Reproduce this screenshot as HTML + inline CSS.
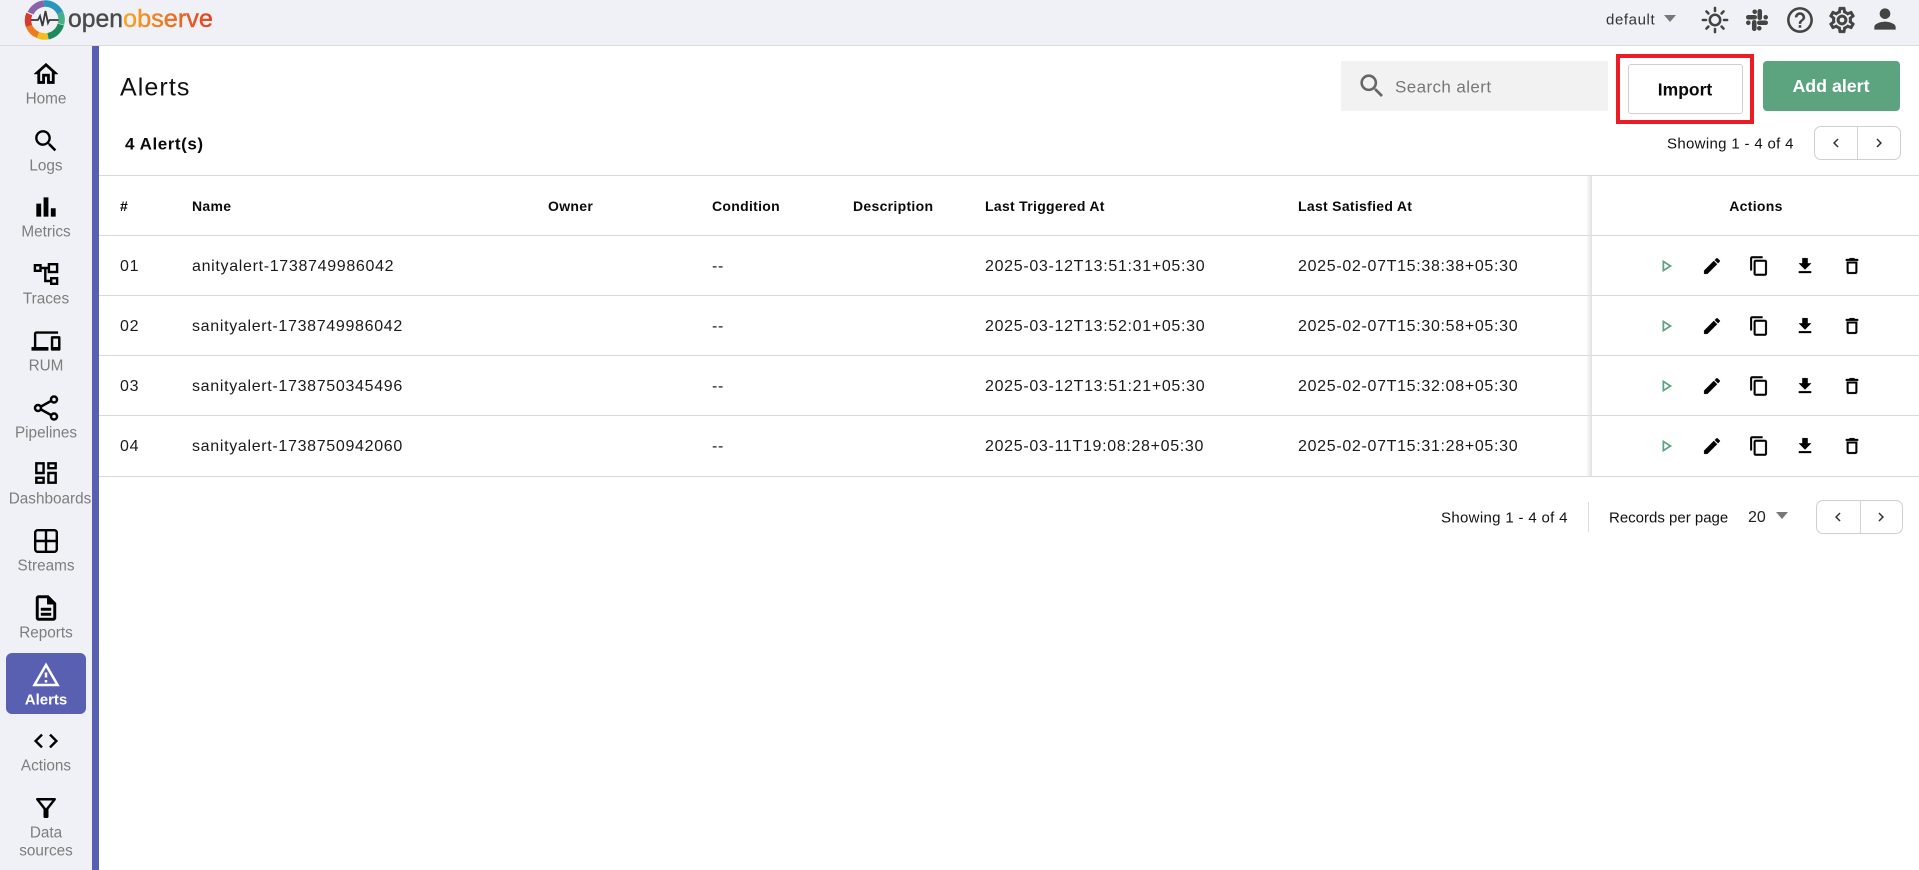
<!DOCTYPE html>
<html><head><meta charset="utf-8"><title>Alerts</title>
<style>
*{box-sizing:border-box}
html,body{margin:0;padding:0;width:1919px;height:870px;overflow:hidden;background:#fff;font-family:"Liberation Sans",sans-serif;color:#111}
.a{position:absolute}
.t{position:absolute;white-space:nowrap;transform:translateY(-50%);line-height:1}
.c{transform:translate(-50%,-50%);text-align:center}
.nl{font-size:15.3px;color:#7d7d7d;margin-top:1px}
.th{font-size:14px;font-weight:bold;color:#0a0a0a;letter-spacing:.3px}
.td{font-size:16px;color:#1a1a1a;letter-spacing:.68px;margin-top:1px}
.line{position:absolute;left:99px;right:0;height:1px;background:#d9d9d9}
svg.i{position:absolute;transform:translate(-50%,-50%);overflow:visible}
svg.b{stroke:#000;stroke-width:.35px}
.pg{position:absolute;border:1px solid #cfcfcf;border-radius:7px;background:#fff}
.pg i{position:absolute;top:0;bottom:0;width:1px;background:#d5d5d5}
</style></head><body>
<svg width="0" height="0" style="position:absolute"><defs>
<symbol id="play" viewBox="0 0 24 24"><path d="M10 8.640L15.270 12 10 15.360V8.640M8 5v14l11-7L8 5z"/></symbol>
<symbol id="edit" viewBox="0 0 24 24"><path d="M3 17.250V21h3.750L17.810 9.940l-3.750-3.750L3 17.250zM20.710 7.040c.39-.39.39-1.020 0-1.410l-2.340-2.340c-.39-.39-1.020-.39-1.410 0l-1.830 1.830 3.750 3.750 1.830-1.830z"/></symbol>
<symbol id="copy" viewBox="0 0 24 24"><path d="M16 1H4c-1.100 0-2 .9-2 2v14h2V3h12V1zm3 4H8c-1.100 0-2 .9-2 2v14c0 1.100.9 2 2 2h11c1.100 0 2-.9 2-2V7c0-1.100-.9-2-2-2zm0 16H8V7h11v14z"/></symbol>
<symbol id="down" viewBox="0 0 24 24"><path d="M19 9h-4V3H9v6H5l7 7 7-7zM5 18v2h14v-2H5z"/></symbol>
<symbol id="del" viewBox="0 0 24 24"><path d="M6 19c0 1.100.9 2 2 2h8c1.100 0 2-.9 2-2V7H6v12zM8 9h8v10H8V9zm7.500-5l-1-1h-5l-1 1H5v2h14V4z"/></symbol>
<symbol id="chl" viewBox="0 0 24 24"><path d="M15.400 7.400L14 6l-6 6 6 6 1.400-1.400L10.800 12z"/></symbol>
<symbol id="chr" viewBox="0 0 24 24"><path d="M8.600 16.600L10 18l6-6-6-6-1.400 1.400L13.200 12z"/></symbol>
</defs></svg>

<!-- top bar -->
<div class="a" style="left:0;top:0;width:1919px;height:46px;background:#f0f1f7;border-bottom:1px solid #dcdcdf"></div>
<svg class="a" style="left:24px;top:0" width="42" height="40" viewBox="0 0 42 40" fill="none">
<g stroke-width="6.500" fill="none">
<path d="M6.600 13.200A16.500 16.500 0 0 1 20 3.600" stroke="#8a63ab"/>
<path d="M20 3.600A16.500 16.500 0 0 1 36.200 13" stroke="#2b96bd"/>
<path d="M36.200 13A16.500 16.500 0 0 1 37 24" stroke="#45b08a"/>
<path d="M36.800 24.500A16.500 16.500 0 0 1 24 36.200" stroke="#1e8a5c"/>
<path d="M24 36.200A16.500 16.500 0 0 1 14 35" stroke="#f2bd1d"/>
<path d="M14 35A16.500 16.500 0 0 1 5 26" stroke="#ee7a22"/>
<path d="M5 26A16.500 16.500 0 0 1 5.300 14" stroke="#d63a2c"/>
</g>
<path d="M7 20h7l2-4 2.500 10 3-15 2.500 12 1.500-3h9" stroke="#3a3a3a" stroke-width="1.800"/>
</svg>
<svg class="a" style="left:66px;top:0" width="150" height="42">
<defs><linearGradient id="lg" x1="0" x2="1" y1="0" y2="0"><stop offset="0" stop-color="#f7a823"/><stop offset="1" stop-color="#e2401f"/></linearGradient></defs>
<text x="2" y="27" font-family="Liberation Sans,sans-serif" font-size="25" fill="#4a4a4a" stroke="#4a4a4a" stroke-width=".4" textLength="55" lengthAdjust="spacingAndGlyphs">open</text>
<text x="57" y="27" font-family="Liberation Sans,sans-serif" font-size="25" fill="url(#lg)" stroke="url(#lg)" stroke-width=".4" textLength="90" lengthAdjust="spacingAndGlyphs">observe</text>
</svg>
<div class="t" style="left:1606px;top:20px;font-size:15px;letter-spacing:.6px;color:#333">default</div>
<div class="a" style="left:1664px;top:15px;width:0;height:0;border-left:6.500px solid transparent;border-right:6.500px solid transparent;border-top:7px solid #777"></div>
<svg class="i" style="left:1715px;top:20px" width="27" height="27" viewBox="0 0 30 30" fill="none" stroke="#444" stroke-width="2.800" stroke-linecap="round"><circle cx="15" cy="15" r="5.800"/><path d="M15 1.500v3.500M15 25v3.500M1.500 15H5M25 15h3.500M5.500 5.500l2.200 2.200M22.300 22.300l2.200 2.200M5.500 24.500l2.200-2.200M22.300 7.700l2.200-2.200"/></svg>
<svg class="i" style="left:1757px;top:20px" width="22" height="22" viewBox="0 0 24 24" fill="none" stroke="#444" stroke-width="5" stroke-linecap="round"><path d="M2.500 9h7M9.500 3v.01M15 2.500v7M21.500 9v.01M14.500 15h7M14.500 21v.01M9 14.500v7M2.500 15v.01"/></svg>
<svg class="i" style="left:1800px;top:20px" width="31" height="31" viewBox="0 0 24 24" fill="#444"><path d="M11 18h2v-2h-2v2zm1-16C6.480 2 2 6.480 2 12s4.480 10 10 10 10-4.480 10-10S17.520 2 12 2zm0 18c-4.410 0-8-3.590-8-8s3.590-8 8-8 8 3.590 8 8-3.590 8-8 8zm0-14c-2.210 0-4 1.790-4 4h2c0-1.100.9-2 2-2s2 .9 2 2c0 2-3 1.750-3 5h2c0-2.250 3-2.500 3-5 0-2.210-1.790-4-4-4z"/></svg>
<svg class="i" style="left:1842px;top:20px" width="31" height="31" viewBox="0 0 24 24" fill="#444" stroke="#444" stroke-width=".35"><path d="M19.430 12.980c.04-.32.07-.64.07-.98 0-.34-.03-.66-.07-.98l2.110-1.650c.19-.15.24-.42.12-.64l-2-3.460c-.09-.16-.26-.25-.44-.25-.06 0-.12.01-.17.03l-2.490 1c-.52-.4-1.080-.73-1.690-.98l-.38-2.650C14.460 2.180 14.250 2 14 2h-4c-.25 0-.46.18-.49.42l-.38 2.650c-.61.25-1.170.59-1.690.98l-2.490-1c-.06-.02-.12-.03-.18-.03-.17 0-.34.09-.43.25l-2 3.460c-.13.22-.07.49.12.64l2.110 1.650c-.04.32-.07.65-.07.98 0 .33.03.66.07.98l-2.110 1.650c-.19.15-.24.42-.12.64l2 3.460c.09.16.26.25.44.25.06 0 .12-.01.17-.03l2.490-1c.52.4 1.080.73 1.690.98l.38 2.650c.03.24.24.42.49.42h4c.25 0 .46-.18.49-.42l.38-2.650c.61-.25 1.170-.59 1.690-.98l2.490 1c.06.02.12.03.18.03.17 0 .34-.09.43-.25l2-3.460c.12-.22.07-.49-.12-.64l-2.110-1.650zm-1.980-1.710c.04.31.05.52.05.73 0 .21-.02.43-.05.73l-.14 1.130.89.7 1.080.84-.7 1.210-1.270-.51-1.040-.42-.9.68c-.43.32-.84.56-1.250.73l-1.060.43-.16 1.130-.2 1.350h-1.400l-.19-1.350-.16-1.130-1.060-.43c-.43-.18-.83-.41-1.230-.71l-.91-.7-1.060.43-1.270.51-.7-1.210 1.080-.84.89-.7-.14-1.130c-.03-.31-.05-.54-.05-.74s.02-.43.05-.73l.14-1.130-.89-.7-1.080-.84.7-1.210 1.270.51 1.040.42.9-.68c.43-.32.84-.56 1.250-.73l1.060-.43.16-1.130.2-1.350h1.390l.19 1.350.16 1.130 1.060.43c.43.18.83.41 1.230.71l.91.7 1.060-.43 1.270-.51.7 1.210-1.070.85-.89.7.14 1.130zM12 8c-2.210 0-4 1.790-4 4s1.790 4 4 4 4-1.790 4-4-1.790-4-4-4zm0 6c-1.100 0-2-.9-2-2s.9-2 2-2 2 .9 2 2-.9 2-2 2z"/></svg>
<svg class="i" style="left:1885px;top:19px" width="32" height="32" viewBox="0 0 24 24" fill="#444"><path d="M12 12c2.210 0 4-1.790 4-4s-1.790-4-4-4-4 1.790-4 4 1.790 4 4 4zm0 2c-2.670 0-8 1.340-8 4v2h16v-2c0-2.660-5.330-4-8-4z"/></svg>

<!-- sidebar -->
<div class="a" style="left:0;top:46px;width:92px;height:824px;background:#f0f1f7"></div>
<div class="a" style="left:92px;top:46px;width:7px;height:824px;background:#5960b2"></div>
<div class="a" style="left:6px;top:653px;width:80px;height:61px;background:#5960b2;border-radius:6px"></div>

<svg class="i b" style="left:46px;top:74px" width="29" height="29" viewBox="0 0 24 24"><path d="M12 5.690l5 4.500V18h-2v-6H9v6H7v-7.810l5-4.500M12 3L2 12h3v8h6v-6h2v6h6v-8h3L12 3z"/></svg>
<div class="t c nl" style="left:46px;top:98px">Home</div>
<svg class="i" style="left:46px;top:141px" width="29" height="29" viewBox="0 0 24 24"><path d="M15.500 14h-.79l-.28-.27C15.410 12.590 16 11.110 16 9.500 16 5.910 13.090 3 9.500 3S3 5.910 3 9.500 5.910 16 9.500 16c1.610 0 3.090-.59 4.230-1.570l.27.28v.79l5 4.990L20.490 19l-4.990-5zm-6 0C7.010 14 5 11.990 5 9.500S7.010 5 9.500 5 14 7.010 14 9.500 11.990 14 9.500 14z"/></svg>
<div class="t c nl" style="left:46px;top:165px">Logs</div>
<svg class="i" style="left:46px;top:207px" width="29" height="29" viewBox="0 0 24 24"><path d="M4 9.200h4V20H4zM10 4h4v16h-4zm6 9h4v7h-4z"/></svg>
<div class="t c nl" style="left:46px;top:231px">Metrics</div>
<svg class="i" style="left:46px;top:273px" width="26" height="24" viewBox="0 0 26 24" fill="none" stroke="#000" stroke-width="2.400"><rect x="1.900" y="4.200" width="5.600" height="5.600"/><rect x="15.900" y="3.200" width="8.200" height="7.800"/><rect x="18.200" y="17.200" width="5.900" height="5.600"/><path d="M7.500 7H16M12.300 7V20H18"/></svg>
<div class="t c nl" style="left:46px;top:298px">Traces</div>
<svg class="i" style="left:46px;top:341px" width="29" height="29" viewBox="0 0 24 24"><path d="M4 6h18V4H4c-1.100 0-2 .9-2 2v11H0v3h14v-3H4V6zm19 2h-6c-.55 0-1 .45-1 1v10c0 .55.45 1 1 1h6c.55 0 1-.45 1-1V9c0-.55-.45-1-1-1zm-1 9h-4v-7h4v7z"/></svg>
<div class="t c nl" style="left:46px;top:365px">RUM</div>
<svg class="i" style="left:46px;top:408px" width="26" height="26" viewBox="0 0 26 26" fill="none" stroke="#000" stroke-width="2.500"><circle cx="5" cy="13" r="3"/><circle cx="21" cy="4.500" r="3"/><circle cx="21" cy="21.500" r="3"/><path d="M8 11.500l10-5.500M8 14.500l10 5.500"/></svg>
<div class="t c nl" style="left:46px;top:432px">Pipelines</div>
<svg class="i" style="left:46px;top:473px" width="29" height="29" viewBox="0 0 24 24"><path d="M19 5v2h-4V5h4M9 5v6H5V5h4m10 8v6h-4v-6h4M9 17v2H5v-2h4M21 3h-8v6h8V3zM11 3H3v10h8V3zm10 8h-8v10h8V11zm-10 4H3v6h8v-6z"/></svg>
<div class="t c nl" style="left:50px;top:498px">Dashboards</div>
<svg class="i" style="left:46px;top:541px" width="24" height="24" viewBox="0 0 24 24" fill="none" stroke="#000" stroke-width="2.400"><rect x="1.200" y="1.200" width="21.600" height="21.600" rx="2.500"/><path d="M12 1v22M1 12h22"/></svg>
<div class="t c nl" style="left:46px;top:565px">Streams</div>
<svg class="i b" style="left:46px;top:608px" width="30" height="30" viewBox="0 0 24 24"><path d="M8 16h8v2H8zm0-4h8v2H8zm6-10H6c-1.100 0-2 .9-2 2v16c0 1.100.89 2 1.990 2H18c1.100 0 2-.9 2-2V8l-6-6zm4 18H6V4h7v5h5v11z"/></svg>
<div class="t c nl" style="left:46px;top:632px">Reports</div>
<svg class="i" style="left:46px;top:675px" width="30" height="30" viewBox="0 0 24 24" fill="#fff"><path d="M12 5.990L19.530 19H4.470L12 5.990M12 2L1 21h22L12 2zm1 14h-2v2h2v-2zm0-6h-2v4h2v-4z"/></svg>
<div class="t c nl" style="left:46px;top:699px;color:#fff;font-weight:bold;font-size:15px">Alerts</div>
<svg class="i" style="left:46px;top:741px" width="29" height="29" viewBox="0 0 24 24"><path d="M9.400 16.600L4.800 12l4.600-4.600L8 6l-6 6 6 6 1.400-1.400zm5.200 0l4.600-4.600-4.600-4.600L16 6l6 6-6 6-1.400-1.400z"/></svg>
<div class="t c nl" style="left:46px;top:765px">Actions</div>
<svg class="i" style="left:46px;top:808px" width="30" height="30" viewBox="0 0 24 24"><path d="M7 6h10l-5.010 6.300L7 6zm-2.750-.39C6.270 8.200 10 13 10 13v6c0 .55.45 1 1 1h2c.55 0 1-.45 1-1v-6s3.720-4.800 5.740-7.390c.51-.66.04-1.610-.79-1.610H5.040c-.83 0-1.300.95-.79 1.610z"/></svg>
<div class="t c nl" style="left:46px;top:832px">Data</div>
<div class="t c nl" style="left:46px;top:850px">sources</div>

<!-- title row -->
<div class="t" style="left:120px;top:88px;font-size:25px;letter-spacing:1.1px;color:#111">Alerts</div>
<div class="a" style="left:1341px;top:61px;width:267px;height:50px;background:#f2f2f2"></div>
<svg class="i" style="left:1372px;top:86px" width="31" height="31" viewBox="0 0 24 24" fill="#666"><path d="M15.500 14h-.79l-.28-.27C15.410 12.590 16 11.110 16 9.500 16 5.910 13.090 3 9.500 3S3 5.910 3 9.500 5.910 16 9.500 16c1.610 0 3.090-.59 4.230-1.570l.27.28v.79l5 4.990L20.490 19l-4.990-5zm-6 0C7.010 14 5 11.990 5 9.500S7.010 5 9.500 5 14 7.010 14 9.500 11.990 14 9.500 14z"/></svg>
<div class="t" style="left:1395px;top:87px;font-size:17px;letter-spacing:.4px;color:#777">Search alert</div>
<div class="a" style="left:1616px;top:54px;width:138px;height:70px;border:4.500px solid #ed1c24"></div>
<div class="a" style="left:1628px;top:64px;width:115px;height:50px;border:1px solid #cfcfcf;border-radius:3px;background:#fff"></div>
<div class="t c" style="left:1685px;top:90px;font-size:17.500px;font-weight:bold;color:#0a0a0a">Import</div>
<div class="a" style="left:1763px;top:61px;width:137px;height:50px;background:#5ca380;border-radius:4px"></div>
<div class="t c" style="left:1831px;top:87px;font-size:17.800px;font-weight:bold;color:#fff">Add alert</div>

<div class="t" style="left:125px;top:144px;font-size:17px;letter-spacing:.55px;font-weight:bold;color:#0a0a0a">4 Alert(s)</div>
<div class="t" style="left:1667px;top:144px;font-size:15px;letter-spacing:.33px;color:#111">Showing 1 - 4 of 4</div>
<div class="pg" style="left:1814px;top:126px;width:87px;height:34px"><i style="left:42px"></i></div>
<svg class="i" style="left:1836px;top:143px" width="18" height="18" fill="#333"><use href="#chl"/></svg>
<svg class="i" style="left:1879px;top:143px" width="18" height="18" fill="#333"><use href="#chr"/></svg>

<!-- table -->
<div class="line" style="top:175px"></div>
<div class="line" style="top:235px"></div>
<div class="line" style="top:295px"></div>
<div class="line" style="top:355px"></div>
<div class="line" style="top:415px"></div>
<div class="line" style="top:476px"></div>
<div class="a" style="left:1586px;top:176px;width:6px;height:300px;background:linear-gradient(90deg,rgba(224,224,224,0),#e0e0e0)"></div>

<div class="t th" style="left:120px;top:206px">#</div>
<div class="t th" style="left:192px;top:206px">Name</div>
<div class="t th" style="left:548px;top:206px">Owner</div>
<div class="t th" style="left:712px;top:206px">Condition</div>
<div class="t th" style="left:853px;top:206px">Description</div>
<div class="t th" style="left:985px;top:206px">Last Triggered At</div>
<div class="t th" style="left:1298px;top:206px">Last Satisfied At</div>
<div class="t th c" style="left:1756px;top:206px">Actions</div>

<div class="t td" style="left:120px;top:266px">01</div>
<div class="t td" style="left:192px;top:266px">anityalert-1738749986042</div>
<div class="t td" style="left:712px;top:266px">--</div>
<div class="t td" style="left:985px;top:266px">2025-03-12T13:51:31+05:30</div>
<div class="t td" style="left:1298px;top:266px">2025-02-07T15:38:38+05:30</div>

<div class="t td" style="left:120px;top:326px">02</div>
<div class="t td" style="left:192px;top:326px">sanityalert-1738749986042</div>
<div class="t td" style="left:712px;top:326px">--</div>
<div class="t td" style="left:985px;top:326px">2025-03-12T13:52:01+05:30</div>
<div class="t td" style="left:1298px;top:326px">2025-02-07T15:30:58+05:30</div>

<div class="t td" style="left:120px;top:386px">03</div>
<div class="t td" style="left:192px;top:386px">sanityalert-1738750345496</div>
<div class="t td" style="left:712px;top:386px">--</div>
<div class="t td" style="left:985px;top:386px">2025-03-12T13:51:21+05:30</div>
<div class="t td" style="left:1298px;top:386px">2025-02-07T15:32:08+05:30</div>

<div class="t td" style="left:120px;top:446px">04</div>
<div class="t td" style="left:192px;top:446px">sanityalert-1738750942060</div>
<div class="t td" style="left:712px;top:446px">--</div>
<div class="t td" style="left:985px;top:446px">2025-03-11T19:08:28+05:30</div>
<div class="t td" style="left:1298px;top:446px">2025-02-07T15:31:28+05:30</div>

<svg class="i" style="left:1666px;top:266px" width="21" height="21" fill="#5ca380"><use href="#play"/></svg>
<svg class="i b" style="left:1712px;top:266px" width="21" height="21"><use href="#edit"/></svg>
<svg class="i b" style="left:1759px;top:266px" width="21" height="21"><use href="#copy"/></svg>
<svg class="i b" style="left:1805px;top:266px" width="21" height="21"><use href="#down"/></svg>
<svg class="i b" style="left:1852px;top:266px" width="21" height="21"><use href="#del"/></svg>

<svg class="i" style="left:1666px;top:326px" width="21" height="21" fill="#5ca380"><use href="#play"/></svg>
<svg class="i b" style="left:1712px;top:326px" width="21" height="21"><use href="#edit"/></svg>
<svg class="i b" style="left:1759px;top:326px" width="21" height="21"><use href="#copy"/></svg>
<svg class="i b" style="left:1805px;top:326px" width="21" height="21"><use href="#down"/></svg>
<svg class="i b" style="left:1852px;top:326px" width="21" height="21"><use href="#del"/></svg>

<svg class="i" style="left:1666px;top:386px" width="21" height="21" fill="#5ca380"><use href="#play"/></svg>
<svg class="i b" style="left:1712px;top:386px" width="21" height="21"><use href="#edit"/></svg>
<svg class="i b" style="left:1759px;top:386px" width="21" height="21"><use href="#copy"/></svg>
<svg class="i b" style="left:1805px;top:386px" width="21" height="21"><use href="#down"/></svg>
<svg class="i b" style="left:1852px;top:386px" width="21" height="21"><use href="#del"/></svg>

<svg class="i" style="left:1666px;top:446px" width="21" height="21" fill="#5ca380"><use href="#play"/></svg>
<svg class="i b" style="left:1712px;top:446px" width="21" height="21"><use href="#edit"/></svg>
<svg class="i b" style="left:1759px;top:446px" width="21" height="21"><use href="#copy"/></svg>
<svg class="i b" style="left:1805px;top:446px" width="21" height="21"><use href="#down"/></svg>
<svg class="i b" style="left:1852px;top:446px" width="21" height="21"><use href="#del"/></svg>

<!-- footer -->
<div class="t" style="left:1441px;top:518px;font-size:15px;letter-spacing:.33px;color:#111">Showing 1 - 4 of 4</div>
<div class="a" style="left:1588px;top:502px;width:1px;height:30px;background:#dcdcdc"></div>
<div class="t" style="left:1609px;top:518px;font-size:15px;color:#111">Records per page</div>
<div class="t" style="left:1748px;top:518px;font-size:16px;color:#222">20</div>
<div class="a" style="left:1776px;top:512px;width:0;height:0;border-left:6.500px solid transparent;border-right:6.500px solid transparent;border-top:7px solid #777"></div>
<div class="pg" style="left:1816px;top:500px;width:87px;height:34px"><i style="left:43px"></i></div>
<svg class="i" style="left:1838px;top:517px" width="18" height="18" fill="#333"><use href="#chl"/></svg>
<svg class="i" style="left:1881px;top:517px" width="18" height="18" fill="#333"><use href="#chr"/></svg>
</body></html>
